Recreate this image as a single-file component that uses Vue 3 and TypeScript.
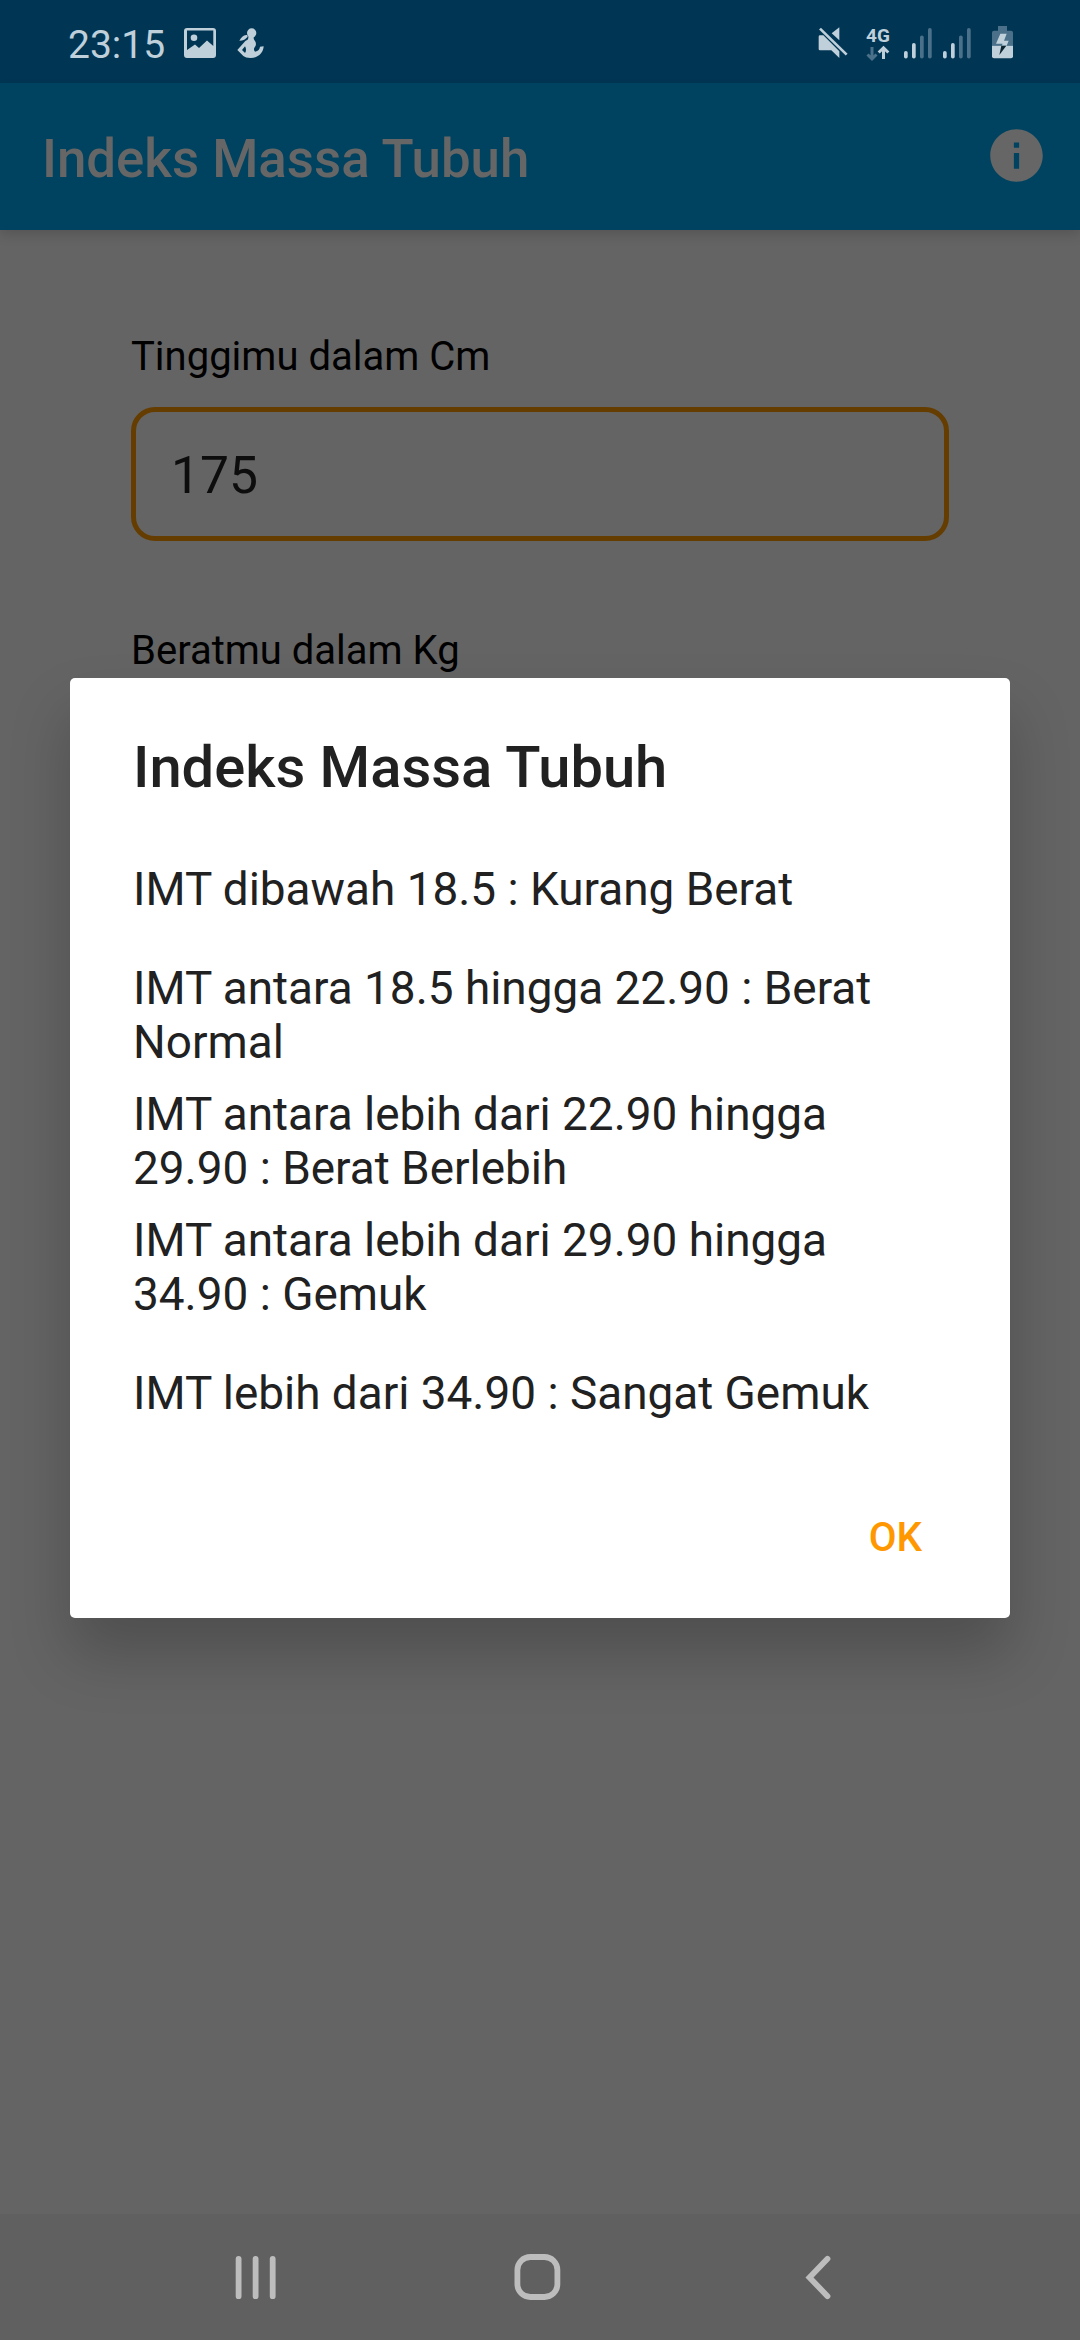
<script setup lang="ts">
interface SignalBar {
  x: number
  top: number
  active: boolean
}

const title = 'Indeks Massa Tubuh'

const categories: string[][] = [
  ['IMT dibawah 18.5 : Kurang Berat'],
  ['IMT antara 18.5 hingga 22.90 : Berat', 'Normal'],
  ['IMT antara lebih dari 22.90 hingga', '29.90 : Berat Berlebih'],
  ['IMT antara lebih dari 29.90 hingga', '34.90 : Gemuk'],
  ['IMT lebih dari 34.90 : Sangat Gemuk'],
]

const signalBars: SignalBar[] = [
  { x: 0, top: 23, active: true },
  { x: 8, top: 15, active: true },
  { x: 16, top: 7.5, active: false },
  { x: 24, top: 0, active: false },
]
</script>

<template>
  <div class="screen">
    <header class="status-bar">
      <span class="clock">23:15</span>
      <svg class="photo-icon" viewBox="0 0 32 30">
        <path
          fill-rule="evenodd"
          d="M3 0H29Q32 0 32 3V27Q32 30 29 30H3Q0 30 0 27V3Q0 0 3 0ZM3 2.5V22L11 16.5L15 20L23 12.5L29.3 18V2.5Z"
        />
        <circle cx="10" cy="9.7" r="3.3" />
      </svg>
      <svg class="pregnancy-icon" viewBox="0 0 80 96">
        <circle cx="44" cy="18" r="14" />
        <path d="M31 24C20 22 13 30 7 41C18 41 27 36 32 29Z" />
        <path
          fill-rule="evenodd"
          d="M35 26L51 27C49 34 50 37 54 42C58 48 58 55 53 61C50 65 50 70 54 74C64 72 68 66 69 59L80 58C79 78 63 93 41 93C30 93 24 91 19 87L1 69L23 44C25 41 30 41 33 37ZM24 58L15 69L24 78C28 71 28 65 24 58Z"
        />
      </svg>

      <div class="status-right">
        <svg class="mute-icon" viewBox="0 0 90 96">
          <path d="M2 29Q2 25 6 25H16L64 73V93L40 70H6Q2 70 2 66ZM64 1V40L41 19Z" />
          <path class="slash" d="M6 5L86 83" />
        </svg>
        <div class="network">
          <span class="network-type">4G</span>
          <svg class="network-arrows" viewBox="0 0 24 15">
            <path class="dim" d="M6 1V13M1.5 8.5L6 13L10.5 8.5" />
            <path d="M17.5 13V2M12.7 6.5L17.5 1.8L22.3 6.5" />
          </svg>
        </div>
        <svg v-for="sim in 2" :key="sim" class="signal" viewBox="0 0 28 30.5">
          <rect
            v-for="bar in signalBars"
            :key="bar.x"
            :class="{ dim: !bar.active }"
            :x="bar.x"
            :y="bar.top"
            width="3.7"
            :height="30.5 - bar.top"
            rx="1.8"
          />
        </svg>
        <svg class="battery" viewBox="0 0 63 98">
          <path class="dim" d="M18 0H45V14H57Q63 14 63 20V59H0V20Q0 14 6 14H18Z" />
          <path d="M0 59H63V91Q63 97 57 97H6Q0 97 0 91Z" />
          <path d="M25 23H44L36 44H50L44 59H29L32 53H12Z" />
          <path class="bolt" d="M28 59H43L22 87Z" />
        </svg>
      </div>
    </header>

    <div class="app-bar">
      <h1>{{ title }}</h1>
      <svg class="info-icon" viewBox="0 0 24 24">
        <path
          d="M12 2C6.48 2 2 6.48 2 12s4.48 10 10 10 10-4.48 10-10S17.52 2 12 2zm1 15h-2v-6h2v6zm0-8h-2V7h2v2z"
        />
      </svg>
    </div>

    <main class="form">
      <div class="field-label">Tinggimu dalam Cm</div>
      <div class="field">175</div>
      <div class="field-label weight-label">Beratmu dalam Kg</div>
    </main>

    <nav class="nav-bar">
      <svg class="nav-icon" viewBox="0 0 50 50">
        <path d="M7.6 6.8V44.2M24.6 6.8V44.2M41.7 6.8V44.2" />
      </svg>
      <svg class="nav-icon" viewBox="0 0 50 50">
        <rect x="4.4" y="5" width="40" height="40" rx="13" />
      </svg>
      <svg class="nav-icon" viewBox="0 0 50 50">
        <path d="M33.5 6.8L15.5 25.5L33.5 44.2" />
      </svg>
    </nav>

    <section class="dialog" role="dialog">
      <h2>{{ title }}</h2>
      <ul>
        <li v-for="(lines, index) in categories" :key="index">
          <span v-for="line in lines" :key="line">{{ line }}</span>
        </li>
      </ul>
      <div class="actions">
        <button type="button">OK</button>
      </div>
    </section>
  </div>
</template>

<style>
body {
  margin: 0;
  background: #646464;
}
</style>

<style scoped>
.screen {
  position: relative;
  display: flex;
  flex-direction: column;
  width: 1080px;
  height: 2340px;
  overflow: hidden;
  background: #646464;
  font-family: Roboto, sans-serif;
}

svg {
  display: block;
  flex: none;
  overflow: visible;
}

.status-bar {
  box-sizing: border-box;
  display: flex;
  align-items: flex-start;
  height: 83px;
  padding: 26px 67px 0 68px;
  background: #003654;
  color: #bfd0da;
  fill: #bfd0da;
}

.clock {
  width: 116px;
  margin-top: -4px;
  font-size: 39px;
  line-height: 46px;
}

.photo-icon {
  width: 32px;
  height: 30px;
  margin-top: 1.5px;
}

.pregnancy-icon {
  width: 26.7px;
  height: 32px;
  margin: 1px 0 0 21px;
}

.status-right {
  display: flex;
  align-items: flex-start;
  margin-left: auto;
}

.mute-icon {
  width: 30px;
  height: 32px;
  margin: 1px 18px 0 0;
}

.slash {
  fill: none;
  stroke: #bfd0da;
  stroke-width: 8;
}

.network {
  width: 24px;
  margin-right: 14px;
}

.network-type {
  display: block;
  height: 20px;
  font-size: 19px;
  font-weight: 700;
  line-height: 20px;
}

.network-arrows {
  width: 24px;
  height: 15px;
  fill: none;
  stroke: #bfd0da;
  stroke-width: 3;
}

.network-arrows .dim {
  stroke: #4a7189;
}

.signal {
  width: 28px;
  height: 30.5px;
  margin: 2px 11px 0 0;
}

.signal .dim,
.battery .dim {
  fill: #4a7189;
}

.battery {
  width: 21px;
  height: 32.7px;
  margin-left: 10px;
}

.battery .bolt {
  fill: #0c2431;
}

.app-bar {
  z-index: 1;
  box-sizing: border-box;
  display: flex;
  align-items: center;
  justify-content: space-between;
  height: 147px;
  padding: 0 32px 0 42px;
  background: #004360;
  box-shadow: 0 4px 12px rgba(0, 0, 0, 0.16);
}

h1 {
  margin: 5px 0 0;
  color: #666;
  font-size: 52.8px;
  font-weight: 500;
  line-height: 62px;
}

.info-icon {
  width: 63px;
  height: 63px;
  margin-top: -2px;
  fill: #666;
}

.form {
  display: flex;
  flex: 1;
  flex-direction: column;
  padding: 103px 131px 0;
}

.field-label {
  color: #000;
  font-size: 40px;
  line-height: 48px;
}

.field {
  box-sizing: border-box;
  height: 134px;
  margin-top: 26px;
  padding: 0 35px;
  border: 5px solid #653d00;
  border-radius: 24px;
  color: #0d0d0d;
  font-size: 51.6px;
  line-height: 128px;
}

.weight-label {
  margin-top: 86px;
}

.nav-bar {
  box-sizing: border-box;
  display: flex;
  align-items: center;
  justify-content: space-between;
  height: 126px;
  padding: 0 236px 0 231px;
  background: #606060;
}

.nav-icon {
  width: 50px;
  height: 50px;
  fill: none;
  stroke: #bdbdbd;
  stroke-width: 5.8;
  stroke-linecap: round;
}

.dialog {
  position: absolute;
  z-index: 2;
  top: 678px;
  left: 70px;
  box-sizing: border-box;
  width: 940px;
  height: 940px;
  padding: 55px 63px 0;
  border-radius: 5px;
  background: #fff;
  color: #212121;
  box-shadow: 0 36px 60px rgba(0, 0, 0, 0.21);
}

h2 {
  margin: 0;
  height: 93px;
  font-size: 57.9px;
  font-weight: 500;
  line-height: 68px;
}

ul {
  margin: 0;
  padding: 0;
  list-style: none;
}

li {
  display: flex;
  flex-direction: column;
  justify-content: center;
  height: 126px;
  font-size: 45.9px;
  line-height: 54px;
  white-space: nowrap;
}

.actions {
  display: flex;
  justify-content: flex-end;
  margin-top: 35px;
  padding-right: 25px;
}

button {
  padding: 0;
  border: 0;
  background: none;
  color: #ff9800;
  font: 500 40.4px/94px Roboto, sans-serif;
}
</style>
